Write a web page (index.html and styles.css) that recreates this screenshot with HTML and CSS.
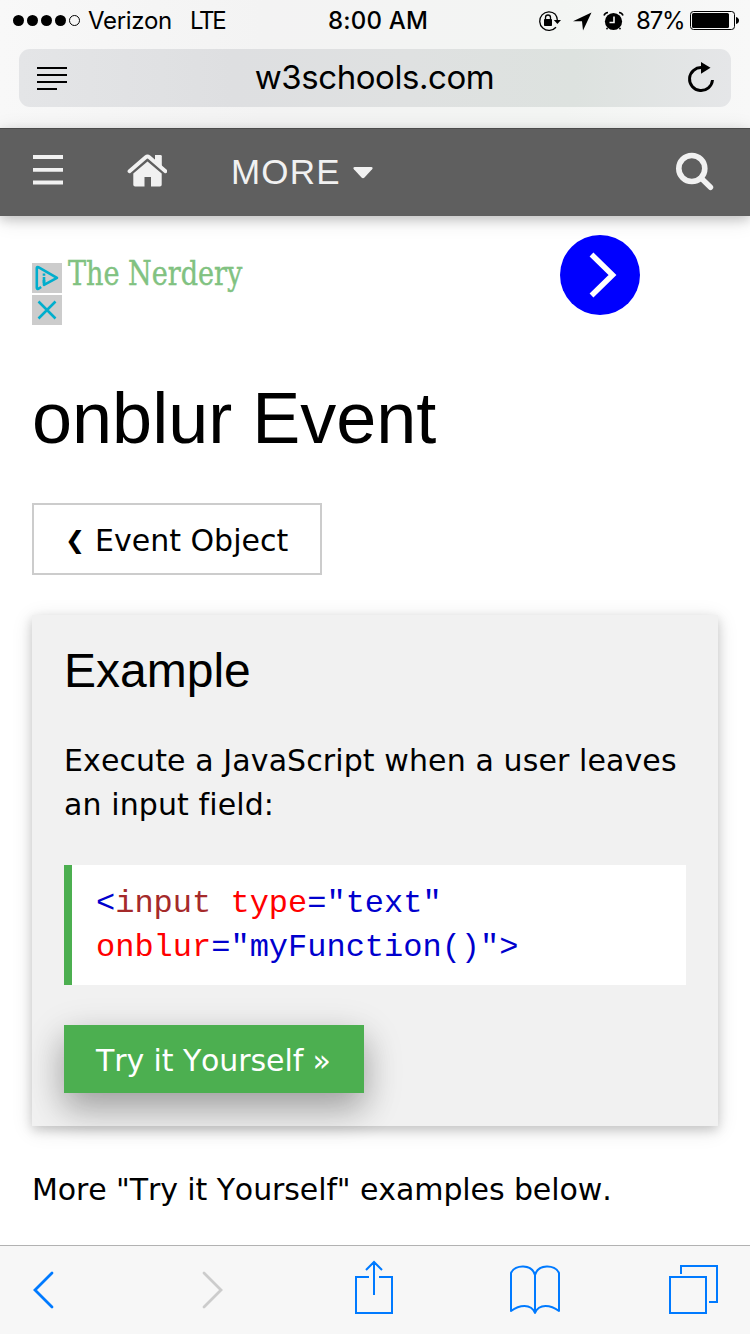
FILE: index.html
```html
<!DOCTYPE html>
<html lang="en">
<head>
<meta charset="utf-8">
<title>onblur Event</title>
<link rel="stylesheet" href="styles.css">
</head>
<body>
<div class="screen">
  <header class="browser">
    <div class="status">
      <svg class="signal" width="70" height="20" viewBox="12 11 70 20"><circle cx="18.500" cy="20.500" r="5.500"/><circle cx="32.500" cy="20.500" r="5.500"/><circle cx="46.500" cy="20.500" r="5.500"/><circle cx="60.500" cy="20.500" r="5.500"/><circle cx="74.500" cy="20.500" r="5" fill="none" stroke="#000"/></svg>
      <span class="carrier">Verizon</span>
      <span class="network">LTE</span>
      <span class="clock">8:00 AM</span>
      <svg class="status-icons" width="90" height="24" viewBox="537 8 90 24">
        <path d="M556.300 13.300A9.300 9.300 0 1 0 557 26.300M556.300 13.300A9.300 9.300 0 0 1 558.300 19" fill="none" stroke="#000" stroke-width="1.300"/>
        <path d="M554.800 19H562l-3.600 4z"/>
        <rect x="545" y="18" width="8" height="7" rx=".8"/><path d="M546.500 19v-2.500a2.500 2.500 0 0 1 5 0V19" fill="none" stroke="#000" stroke-width="1.300"/>
        <path d="M592.500 11.500L574 20.300h9L584 29.500z"/>
        <circle cx="614.500" cy="20.500" r="8.600"/>
        <path d="M605 14.500q1-2.800 4-3M624 14.500q-1-2.800-4-3" fill="none" stroke="#000" stroke-width="1.600"/>
        <path d="M608.500 27l-1 1.200M620.500 27l1 1.200" stroke="#000" stroke-width="1.500"/>
        <path d="M615 15.500v6h-4.500" fill="none" stroke="#f6f7f6" stroke-width="1.600"/>
      </svg>
      <span class="percent">87%</span>
      <svg class="battery" width="50" height="20" viewBox="690 11 50 20"><rect x="690.500" y="11.500" width="44" height="18" rx="3" fill="none" stroke="#000"/><rect x="692" y="13" width="37" height="15" rx="1.500"/><path d="M736 17q3 1 3 3.500t-3 3.500z"/></svg>
    </div>
    <div class="address">
      <svg class="reader" width="30" height="24" viewBox="0 0 30 24"><path d="M0 2h30M0 9h30M0 16h30M0 23h20" stroke="#000" stroke-width="2"/></svg>
      <span class="url">w3schools.com</span>
      <svg class="reload" width="30" height="34" viewBox="686 61 30 34"><path d="M702 67.600A11.500 11.500 0 1 0 712.500 80" fill="none" stroke="#000" stroke-width="2.900"/><path d="M701 62l9.500 5.700-9.500 6z"/></svg>
    </div>
  </header>

  <nav class="nav">
    <svg class="menu" width="30" height="30" viewBox="0 0 30 30"><path d="M0 2h30M0 14.800h30M0 27.500h30" stroke="#f1f1f1" stroke-width="3.800"/></svg>
    <svg class="home" width="40" height="34" viewBox="127 154 40 34"><path d="M147.500 161.500l14.200 12v11.300q0 1.800-1.800 1.800h-8.900V177h-6.500v9.600h-9.400q-1.800 0-1.800-1.800v-11.300z"/><path d="M129.500 171.300L145.700 157.200q1.800-1.500 3.600 0L165.500 171.300" fill="none" stroke="#5f5f5f" stroke-width="5.500"/><path d="M129.500 171.300L145.700 157.200q1.800-1.500 3.600 0L165.500 171.300" fill="none" stroke="#f1f1f1" stroke-width="3.800" stroke-linecap="round"/><path d="M155 155h5.500q1.300 0 1.300 1.300V167l-6.800-6z"/></svg>
    <span class="more">MORE</span>
    <svg class="caret" width="20" height="12" viewBox="0 0 20 12"><path d="M1.500 0h17q2 .6.600 2.200l-7.600 8.300q-1.500 1.500-3 0L.9 2.200Q-.5.600 1.500 0z"/></svg>
    <svg class="search" width="40" height="40" viewBox="674 151 40 40"><circle cx="691.800" cy="168.500" r="13" fill="none" stroke="#f1f1f1" stroke-width="5.600"/><path d="M701 178l9.500 9.300" stroke="#f1f1f1" stroke-width="5.400" stroke-linecap="round"/></svg>
  </nav>

  <main class="page">
    <section class="ad">
      <div class="ad-controls">
        <svg width="30" height="30" viewBox="0 0 30 30"><path d="M9.200 24l-3 1.800q-1.400.5-1.400-1.200V5q0-1.500 1.500-.8L25 14.800 12 21.800V17" fill="none" stroke="#00aecd" stroke-width="2.600" stroke-linejoin="round"/><path d="M12 14v6M12 10.500v2.200" stroke="#00aecd" stroke-width="2.600"/></svg>
        <svg width="30" height="30" viewBox="0 0 30 30"><path d="M6.500 6.500l17 17m0-17l-17 17" stroke="#00aecd" stroke-width="2.500"/></svg>
      </div>
      <span class="ad-title">The Nerdery</span>
      <svg class="ad-go" width="80" height="80" viewBox="0 0 80 80"><circle cx="40" cy="40" r="40" fill="#00f"/><path d="M31.500 19.500L52.500 40 31.500 60.500" fill="none" stroke="#fff" stroke-width="5.500"/></svg>
    </section>
    <h1>onblur Event</h1>
    <a class="prev"><span class="prev-mark">❮</span><span>Event Object</span></a>
    <section class="card">
      <h2>Example</h2>
      <p class="intro">Execute a JavaScript when a user leaves<br>an input field:</p>
      <div class="code"><span class="v">&lt;</span><span class="t">input</span> <span class="a">type</span><span class="v">="text"</span><br><span class="a">onblur</span><span class="v">="myFunction()"&gt;</span></div>
      <a class="try">Try it Yourself »</a>
    </section>
    <p class="after">More "Try it Yourself" examples below.</p>
  </main>

  <footer class="toolbar">
    <svg class="back" width="50" height="60" viewBox="20 1260 50 60"><path d="M52 1273l-17 17 17 17" stroke="#007aff" stroke-width="2.800" stroke-linecap="round"/></svg>
    <svg class="forward" width="50" height="60" viewBox="186 1260 50 60"><path d="M204 1273l17 17-17 17" stroke="#ccc" stroke-width="2.800" stroke-linecap="round"/></svg>
    <svg class="share" width="50" height="60" viewBox="349 1260 50 60"><path d="M369 1277h-13v36h36v-36h-13M374 1295v-32M366 1270l8-8 8 8" stroke="#007aff" stroke-width="2"/></svg>
    <svg class="books" width="60" height="60" viewBox="505 1260 60 60"><path d="M535 1313v-40M535 1275c-3-11-20-11-24-2v38c8-6 20-8 24 2 4-10 16-8 24-2v-38c-4-9-21-9-24 2" stroke="#007aff" stroke-width="2" stroke-linejoin="round"/></svg>
    <svg class="tabs" width="60" height="60" viewBox="664 1260 60 60"><path d="M670 1277h36v36h-36zM681 1274v-8h36v36h-8" stroke="#007aff" stroke-width="2"/></svg>
  </footer>
</div>
</body>
</html>
```

FILE: styles.css
```css
* { box-sizing: border-box; }
body { margin: 0; background: #fff; color: #000; font-family: "DejaVu Sans", sans-serif; }
svg { display: block; flex: none; }
h1, h2, p { margin: 0; font-weight: 400; white-space: nowrap; }
.screen { width: 750px; height: 1334px; display: flex; flex-direction: column; overflow: hidden; }

.browser { height: 128px; flex: none; background: linear-gradient(90deg, #f8f8f8, #f3f3f3 35%, #f3f5f3 75%, #f8f8f8); font-family: Inter, sans-serif; }
.status { height: 49px; padding: 0 10px 8px 12px; display: flex; align-items: center; font-size: 24px; line-height: 41px; white-space: nowrap; }
.carrier { width: 102px; padding-left: 6px; letter-spacing: -.3px; }
.network { width: 144px; padding-left: 6px; letter-spacing: -2.3px; }
.clock { width: 208px; font-weight: 500; letter-spacing: .2px; }
.percent { width: 63px; padding-left: 10px; letter-spacing: -1.2px; }
.battery { margin-left: 1px; }
.address { height: 58px; margin: 0 19px; padding: 0 15px 0 18px; border-radius: 11px; display: flex; align-items: center; justify-content: space-between; background: linear-gradient(90deg, #e4e5e7, #dedfe1 30%, #dfe1e1 55%, #dde2df 78%, #e5e6e8); }
.url { margin-left: -4px; padding-bottom: 2px; font-size: 33px; line-height: 56px; letter-spacing: -.45px; }

.nav { height: 88px; flex: none; padding: 0 36px 0 33px; border-top: 1px solid #4b4b4b; display: flex; align-items: center; background: #5f5f5f; fill: #f1f1f1; box-shadow: 0 4px 10px rgba(0,0,0,.16), 0 4px 20px rgba(0,0,0,.12); position: relative; }
.menu { margin-bottom: 5px; }
.home { margin: 0 0 4px 64px; }
.more { width: 108px; margin: 0 0 2px 64px; color: #f1f1f1; font: 35px/86px "Liberation Sans", sans-serif; letter-spacing: 1.2px; }
.caret { margin: 1px 0 0 14px; }
.search { margin: 0 0 4px auto; }

.page { flex: 1; padding: 0 32px; }
.ad { height: 152px; display: flex; align-items: flex-start; padding-top: 19px; }
.ad-controls { display: flex; flex-direction: column; gap: 2px; margin-top: 28px; }
.ad-controls svg { background: #ccc; }
.ad-title { width: 492px; margin: 17px 0 0 6px; color: #81c281; font: 33px/44px "DejaVu Serif", serif; font-stretch: condensed; white-space: nowrap; transform: scaleX(.912); transform-origin: left; -webkit-text-stroke: .4px #81c281; }
h1 { font: 72px/100px "Liberation Sans", sans-serif; }
.prev { width: 290px; height: 72px; margin-top: 35px; padding: 2px 0 0 31px; border: 2px solid #ccc; display: flex; align-items: center; font-size: 30px; white-space: nowrap; }
.prev-mark { width: 30px; font-size: 24px; }
.card { height: 511px; margin-top: 40px; padding: 20px 32px 0; background: #f1f1f1; box-shadow: 0 4px 10px rgba(0,0,0,.16), 0 4px 20px rgba(0,0,0,.12); }
h2 { font: 48px/72px "Liberation Sans", sans-serif; }
.intro { margin-top: 32px; font-size: 30px; line-height: 44px; letter-spacing: .1px; font-kerning: none; }
.code { height: 120px; margin-top: 38px; padding: 17px 0 15px 24px; border-left: 8px solid #4caf50; background: #fff; font: 32px/44px "Liberation Mono", monospace; white-space: pre; }
.v { color: #0000cd; }
.t { color: #a52a2a; }
.a { color: #f00; }
.try { width: 300px; height: 68px; margin-top: 40px; padding: 0 0 0 32px; display: block; background: #4caf50; color: #fff; font-size: 30px; line-height: 72px; letter-spacing: -.1px; font-kerning: none; white-space: nowrap; box-shadow: 0 16px 32px rgba(0,0,0,.2), 0 12px 40px rgba(0,0,0,.19); }
.after { margin-top: 42px; font-size: 30px; line-height: 44px; letter-spacing: -.1px; font-kerning: none; }

.toolbar { height: 89px; flex: none; padding-left: 20px; border-top: 1px solid #b2b2b2; display: flex; align-items: center; background: #f7f7f7; fill: none; position: relative; }
.forward { margin-left: 116px; }
.share { margin-left: 113px; }
.books { margin-left: 106px; }
.tabs { margin-left: 99px; }
```
